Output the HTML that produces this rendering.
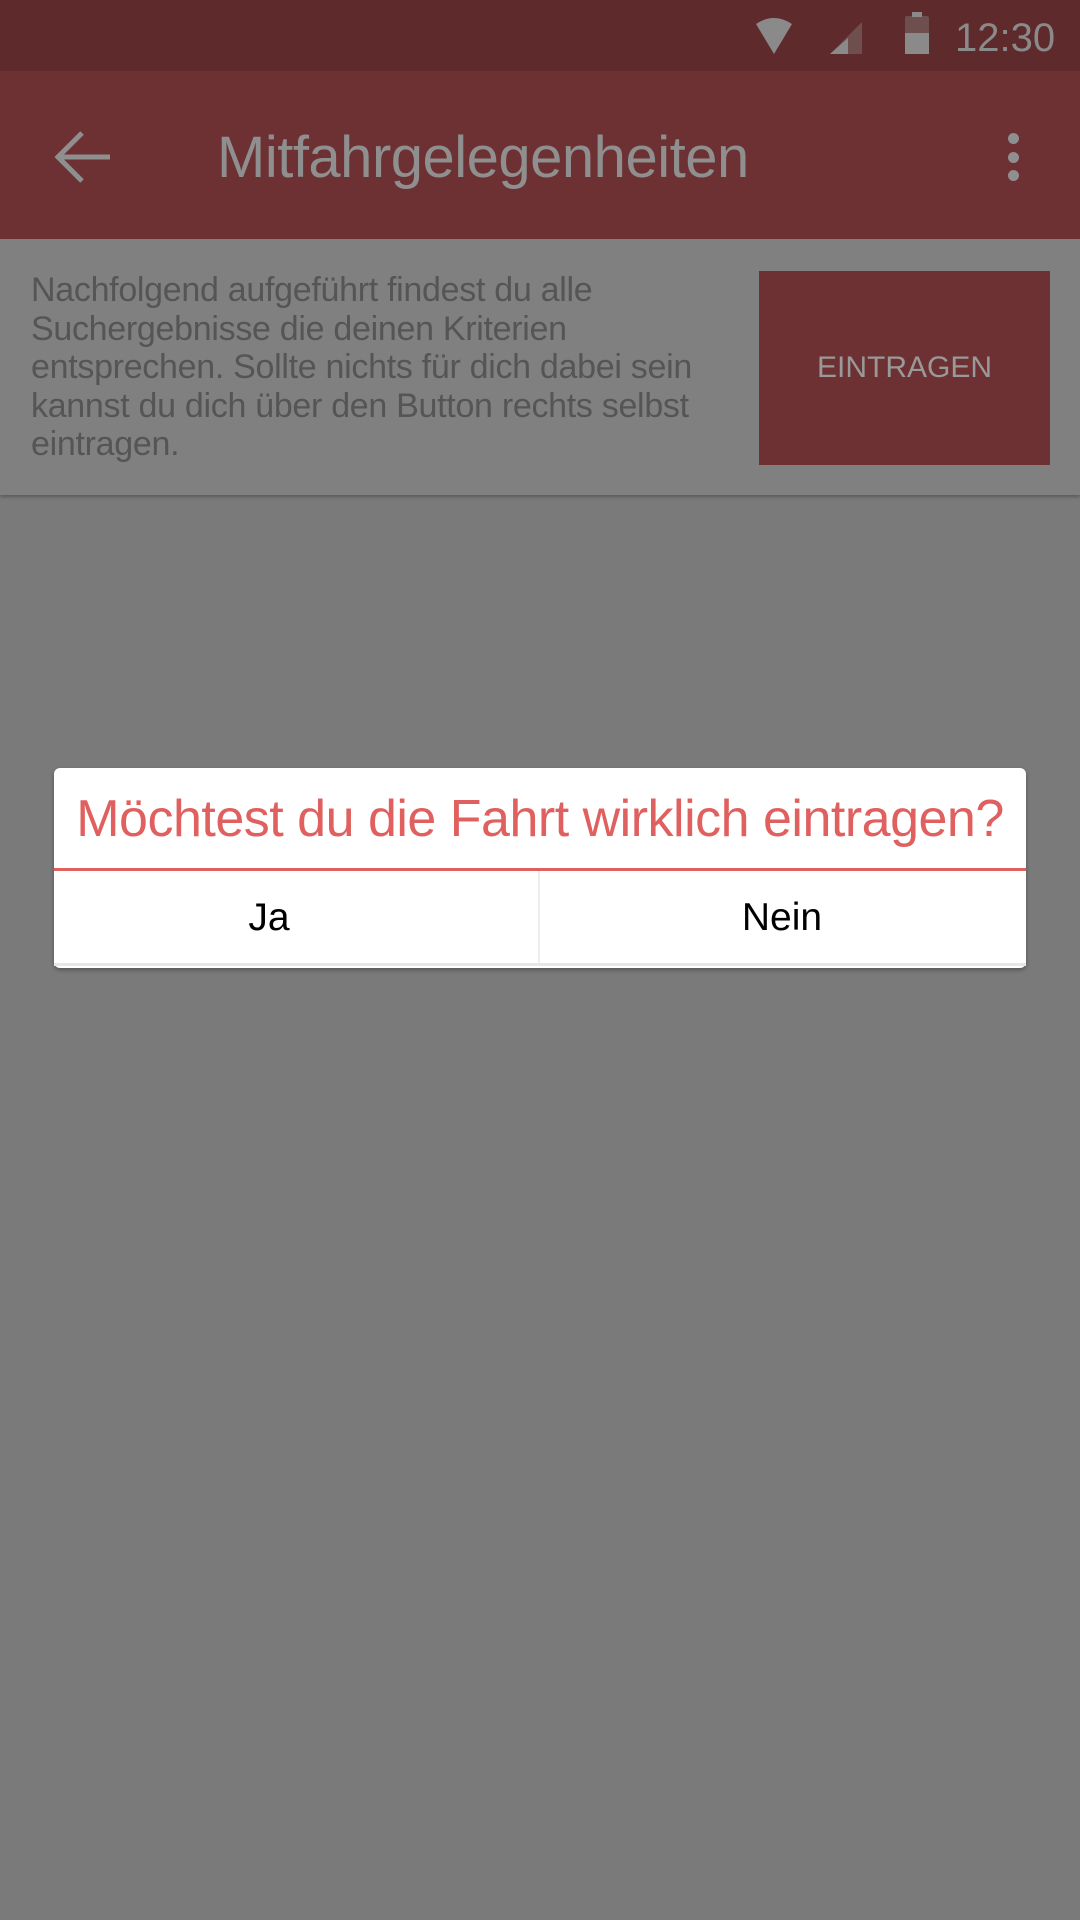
<!DOCTYPE html>
<html><head><meta charset="utf-8"><style>
body{margin:0;width:1080px;height:1920px;background:#7a7a7a;font-family:"Liberation Sans","DejaVu Sans",sans-serif;position:relative;overflow:hidden}
.abs{position:absolute}
</style></head><body>
<div class="abs" style="left:0;top:0;width:1080px;height:71px;background:#5e2a2b"></div>
<svg class="abs" style="left:750px;top:14px" width="120" height="44" viewBox="0 0 120 44">
<path d="M6 10 Q24 -2 42 10 L24 40 Z" fill="#8a8a8a"/>
<path d="M80 40 L112 40 L112 8 Z" fill="#6f4e4e"/>
<path d="M80 40 L98 40 L98 24 Z" fill="#8a8a8a"/>
</svg>
<div class="abs" style="left:905px;top:16px;width:24px;height:38px;background:#6f4e4e;border-radius:2px"></div>
<div class="abs" style="left:912px;top:12px;width:10px;height:5px;background:#8a8a8a"></div>
<div class="abs" style="left:905px;top:33px;width:24px;height:21px;background:#8a8a8a"></div>
<div class="abs" style="left:955px;top:16px;font-size:40px;color:#8a8a8a">12:30</div>
<div class="abs" style="left:0;top:71px;width:1080px;height:168px;background:#6e3133"></div>
<svg class="abs" style="left:52px;top:125px" width="64" height="64" viewBox="0 0 64 64">
<path d="M58 32 H8 M30 8 L6 32 L30 56" stroke="#8f8f8f" stroke-width="5" fill="none"/>
</svg>
<div class="abs" style="left:217px;top:124px;font-size:58px;color:#8f8f8f;letter-spacing:-0.5px">Mitfahrgelegenheiten</div>
<div class="abs" style="left:1008px;top:133px;width:11px;height:11px;border-radius:50%;background:#8f8f8f"></div>
<div class="abs" style="left:1008px;top:152px;width:11px;height:11px;border-radius:50%;background:#8f8f8f"></div>
<div class="abs" style="left:1008px;top:170px;width:11px;height:11px;border-radius:50%;background:#8f8f8f"></div>
<div class="abs" style="left:0;top:239px;width:1080px;height:256px;background:#808080;box-shadow:0 2px 3px rgba(0,0,0,0.25)"></div>
<div class="abs" style="left:31px;top:271px;width:740px;font-size:34px;line-height:38.6px;color:#555;letter-spacing:-0.3px">Nachfolgend aufgeführt findest du alle<br>Suchergebnisse die deinen Kriterien<br>entsprechen. Sollte nichts für dich dabei sein<br>kannst du dich über den Button rechts selbst<br>eintragen.</div>
<div class="abs" style="left:759px;top:271px;width:291px;height:194px;background:#6e3133;color:#999;font-size:30px;display:flex;align-items:center;justify-content:center">EINTRAGEN</div>
<div class="abs" style="left:54px;top:768px;width:972px;height:200px;background:#fff;border-radius:6px;box-shadow:0 2px 4px rgba(0,0,0,0.3)"></div>
<div class="abs" style="left:54px;top:789px;width:972px;text-align:center;font-size:52px;color:#e06060;letter-spacing:-0.5px">Möchtest du die Fahrt wirklich eintragen?</div>
<div class="abs" style="left:54px;top:868px;width:972px;height:3px;background:#e06060"></div>
<div class="abs" style="left:538px;top:871px;width:2px;height:94px;background:#eee"></div>
<div class="abs" style="left:54px;top:963px;width:972px;height:3px;background:#e6e6e6"></div>
<div class="abs" style="left:169px;top:896px;width:200px;text-align:center;font-size:39px;color:#000">Ja</div>
<div class="abs" style="left:540px;top:896px;width:484px;text-align:center;font-size:39px;color:#000">Nein</div>
</body></html>
